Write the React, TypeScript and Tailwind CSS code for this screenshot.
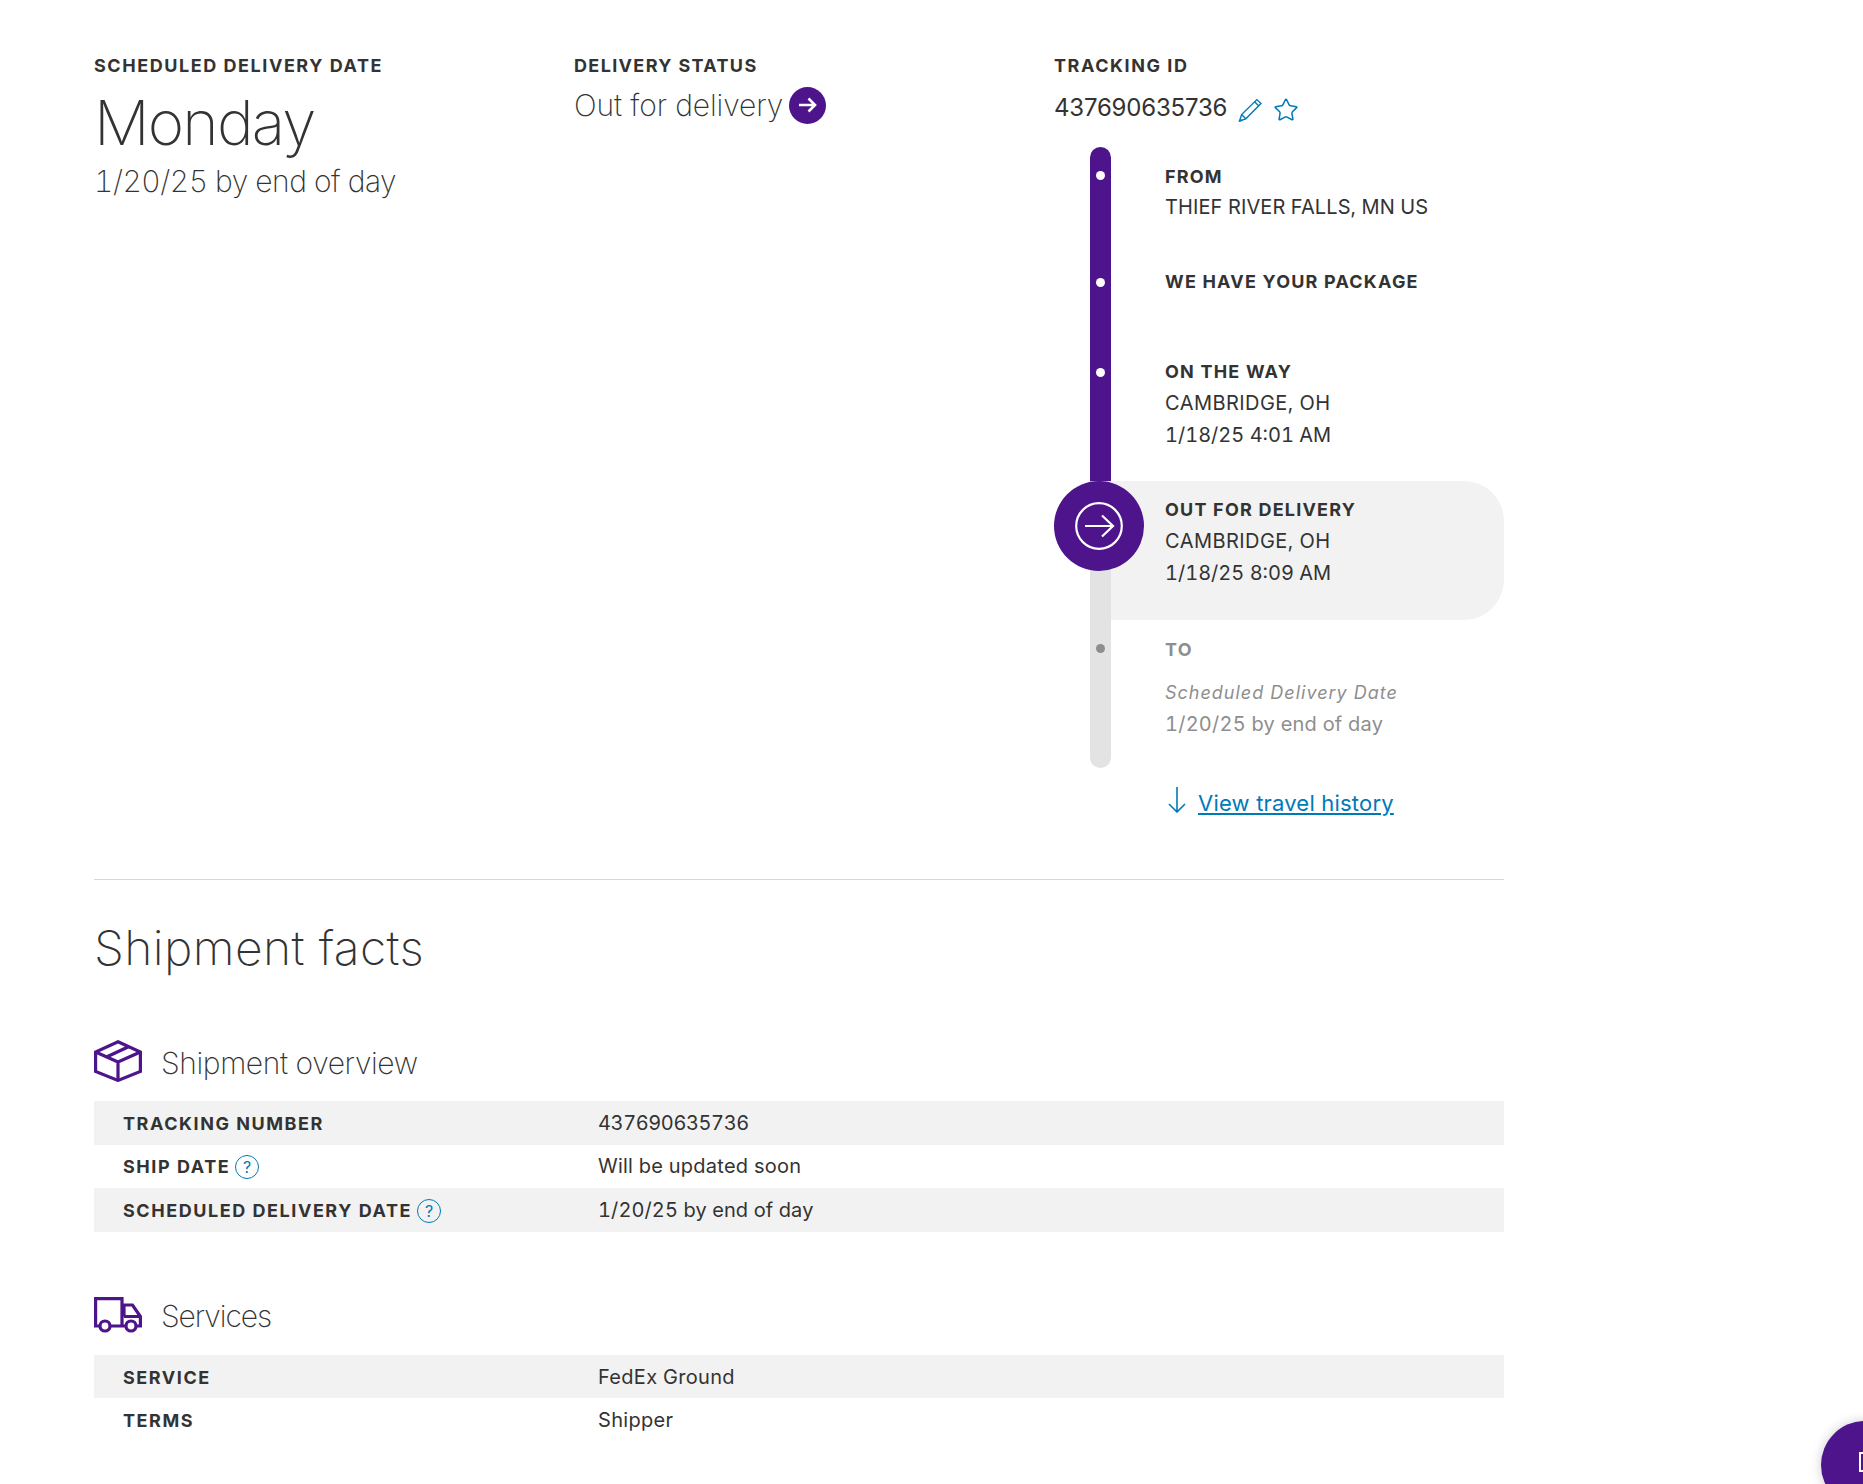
import { Star } from "lucide-react";

const sans = "font-['Inter','Liberation_Sans',sans-serif]";
const label = "text-[18px] leading-[24px] font-bold tracking-[1.55px] text-[#333333]";
const stepLabel = "text-[18px] leading-[24px] font-bold tracking-[1.2px] text-[#333333]";
const value = "text-[20px] leading-[32px] tabular-nums text-[#333333]";

function ArrowCircle() {
  return (
    <svg viewBox="0 0 48 48" className="w-[48px] h-[48px]" fill="none" stroke="white" strokeWidth="2.2">
      <circle cx="24" cy="24" r="22.8" />
      <path d="M10 24h27M27 13.5 38 24 27 34.5" />
    </svg>
  );
}

function Pencil() {
  return (
    <svg viewBox="0 0 24 24" className="w-[24px] h-[24px]" fill="none" stroke="#007ab7" strokeWidth="1.4">
      <path d="M1.5 23 3.6 16.6 18.8 1.6 23 5.6 7.8 20.8Z" />
      <path d="M3.6 16.6 7.8 20.8M16.6 3.8 20.8 8M1.5 23l3-1" />
    </svg>
  );
}

function Help() {
  return (
    <span className="inline-flex w-[24px] h-[24px] items-center justify-center rounded-full border-[1.5px] border-[#007ab7] text-[16px] leading-none font-normal text-[#007ab7] tracking-normal">
      ?
    </span>
  );
}

function PackageIcon() {
  return (
    <svg viewBox="0 0 48 42" className="w-[48px] h-[42px] -translate-y-[2px]" fill="none" stroke="#4d148c" strokeWidth="3.2">
      <path d="M24 1.8 46.4 12v19.5L24 40.4 1.6 31.5V12Z" />
      <path d="M1.6 12 24 22 46.4 12M24 22v18.4M12.5 17 35 6.5" />
    </svg>
  );
}

function TruckIcon() {
  return (
    <svg viewBox="0 0 48 36" className="w-[48px] h-[36px] -translate-y-[2px]" fill="none" stroke="#4d148c" strokeWidth="3.2">
      <path d="M5.8 29H1.6V1.6h26.4V29H16.2M28 8h10.5l7.9 11.5V29h-4M28 29h3.8" />
      <path d="M30 19.5h16M30 8v11.5" />
      <circle cx="11" cy="29" r="5" />
      <circle cx="37" cy="29" r="5" />
    </svg>
  );
}

function Step({
  railClass,
  dotClass,
  dotTop,
  height,
  children,
}: {
  railClass: string;
  dotClass?: string;
  dotTop?: string;
  height: string;
  children: React.ReactNode;
}) {
  return (
    <div className={`flex ${height}`}>
      <div className={`ml-[36px] w-[21px] flex justify-center shrink-0 ${railClass}`}>
        {dotClass && <span className={`w-[9px] h-[9px] rounded-full ${dotTop} ${dotClass}`} />}
      </div>
      {children}
    </div>
  );
}

function Row({
  name,
  val,
  valClass,
  shaded,
  help,
}: {
  name: string;
  val: string;
  valClass?: string;
  shaded?: boolean;
  help?: boolean;
}) {
  return (
    <div className={`flex items-center h-[43.6px] pl-[29px] ${shaded ? "bg-[#f2f2f2]" : ""}`}>
      <div className={`w-[475px] flex items-center gap-[5px] pt-[2px] ${label}`}>
        {name}
        {help && <Help />}
      </div>
      <div className={`${value} ${valClass ?? ""}`}>{val}</div>
    </div>
  );
}

export default function App() {
  return (
    <div className={`relative w-[1863px] h-[1484px] overflow-hidden bg-white ${sans}`}>
      <div className="w-[1504px] pl-[94px] pt-[54px]">
        <div className="flex">
          <div className="w-[480px]">
            <div className={label}>SCHEDULED DELIVERY DATE</div>
            <div className="mt-[7px] text-[62px] leading-[76px] font-extralight tracking-[-1.8px] text-[#333333]">
              Monday
            </div>
            <div className="text-[30px] leading-[40px] font-extralight tabular-nums tracking-[-0.5px] text-[#333333]">
              1/20/25 by end of day
            </div>
          </div>
          <div className="w-[480px]">
            <div className="text-[18px] leading-[24px] font-bold tracking-[1.35px] text-[#333333]">DELIVERY STATUS</div>
            <div className="flex items-center gap-[6px] mt-[8px]">
              <span className="text-[30px] leading-[38px] font-extralight tracking-[-0.1px] text-[#333333]">
                Out for delivery
              </span>
              <span className="w-[37px] h-[37px] rounded-full bg-[#4d148c] flex items-center justify-center">
                <svg viewBox="0 0 20 20" className="w-[20px] h-[20px]" fill="none" stroke="white" strokeWidth="2.6">
                  <path d="M1 10h16M10.5 3.5 17 10l-6.5 6.5" />
                </svg>
              </span>
            </div>
          </div>
          <div className="w-[450px]">
            <div className={label}>TRACKING ID</div>
            <div className="flex items-center mt-[14px] h-[32px]">
              <span className="text-[24px] leading-[32px] tracking-[-0.2px] text-[#333333]">437690635736</span>
              <span className="ml-[11px] mt-[3px]">
                <Pencil />
              </span>
              <Star className="ml-[11px] mt-[3px] w-[26px] h-[26px] text-[#007ab7]" strokeWidth={1.4} />
            </div>

            <div className="relative mt-[23px]">
              <Step railClass="bg-[#4d148c] rounded-t-full" dotClass="bg-white" dotTop="mt-[24px]" height="h-[93px]">
                <div className="pl-[54px] pt-[18px]">
                  <div className={stepLabel}>FROM</div>
                  <div className={`${value} mt-[2px] tracking-[0.1px]`}>THIEF RIVER FALLS, MN US</div>
                </div>
              </Step>
              <Step railClass="bg-[#4d148c]" dotClass="bg-white" dotTop="mt-[38px]" height="h-[90px]">
                <div className="pl-[54px] pt-[30px]">
                  <div className={stepLabel}>WE HAVE YOUR PACKAGE</div>
                </div>
              </Step>
              <Step railClass="bg-[#4d148c]" dotClass="bg-white" dotTop="mt-[38px]" height="h-[151px]">
                <div className="pl-[54px] pt-[30px]">
                  <div className={stepLabel}>ON THE WAY</div>
                  <div className={`${value} mt-[3px] tracking-[0.45px]`}>CAMBRIDGE, OH</div>
                  <div className={value}>1/18/25 4:01 AM</div>
                </div>
              </Step>
              <Step railClass="bg-[#e3e3e3]" height="h-[139px]">
                <div className="pl-[54px] pt-[17px] flex-1 bg-[#f2f2f2] rounded-r-[40px]">
                  <div className={stepLabel}>OUT FOR DELIVERY</div>
                  <div className={`${value} mt-[3px] tracking-[0.45px]`}>CAMBRIDGE, OH</div>
                  <div className={value}>1/18/25 8:09 AM</div>
                </div>
              </Step>
              <Step railClass="bg-[#e3e3e3] rounded-b-full" dotClass="bg-[#8e8e8e]" dotTop="mt-[24px]" height="h-[148px]">
                <div className="pl-[54px] pt-[18px]">
                  <div className="text-[18px] leading-[24px] font-bold tracking-[1.2px] text-[#8e8e8e]">TO</div>
                  <div className="mt-[19px] text-[18px] leading-[24px] italic tracking-[1px] text-[#8e8e8e]">
                    Scheduled Delivery Date
                  </div>
                  <div className="mt-[3px] text-[20px] leading-[32px] tabular-nums tracking-[0.23px] text-[#8e8e8e]">
                    1/20/25 by end of day
                  </div>
                </div>
              </Step>
              {/* current step marker sits over the rail */}
              <div className="absolute left-0 top-[334px] w-[90px] h-[90px] rounded-full bg-[#4d148c] flex items-center justify-center">
                <ArrowCircle />
              </div>
              <div className="flex items-center h-[40px] mt-[15px] pl-[114px]">
                <svg viewBox="0 0 18 26" className="w-[18px] h-[26px] -mt-[6px]" fill="none" stroke="#007ab7" strokeWidth="1.6">
                  <path d="M9 0v25M1 17l8 8 8-8" />
                </svg>
                <a className="ml-[12px] text-[22px] leading-[32px] tracking-[0.2px] text-[#007ab7] underline underline-offset-2">
                  View travel history
                </a>
              </div>
            </div>
          </div>
        </div>

        <div className="mt-[56px] border-t border-[#d8d8d8]" />

        <h1 className="mt-[36px] text-[48px] leading-[64px] font-extralight tracking-[0.4px] text-[#333333]">
          Shipment facts
        </h1>

        <div className="mt-[59px] mb-[14px] h-[48px] flex items-center gap-[19px]">
          <PackageIcon />
          <span className="text-[30px] font-extralight tracking-[-0.4px] text-[#333333]">Shipment overview</span>
        </div>
        <Row name="TRACKING NUMBER" val="437690635736" valClass="tracking-[-0.4px]" shaded />
        <Row name="SHIP DATE" val="Will be updated soon" valClass="tracking-[0.24px]" help />
        <Row name="SCHEDULED DELIVERY DATE" val="1/20/25 by end of day" valClass="tracking-[0.1px]" shaded help />

        <div className="mt-[61px] mb-[14px] h-[48px] flex items-center gap-[19px]">
          <TruckIcon />
          <span className="text-[30px] font-extralight tracking-[-1.1px] text-[#333333]">Services</span>
        </div>
        <Row name="SERVICE" val="FedEx Ground" valClass="tracking-[0.3px]" shaded />
        <Row name="TERMS" val="Shipper" valClass="tracking-[0.3px]" />
      </div>

      {/* chat launcher, cut off by the window edge */}
      <div className="absolute left-[1821px] top-[1421px] w-[88px] h-[88px] rounded-full bg-[#4d148c] shadow-[0_0_12px_rgba(0,0,0,0.2)]">
        <div className="absolute left-[38px] top-[31px] w-[22px] h-[20px] border-[2px] border-white" />
      </div>
    </div>
  );
}
